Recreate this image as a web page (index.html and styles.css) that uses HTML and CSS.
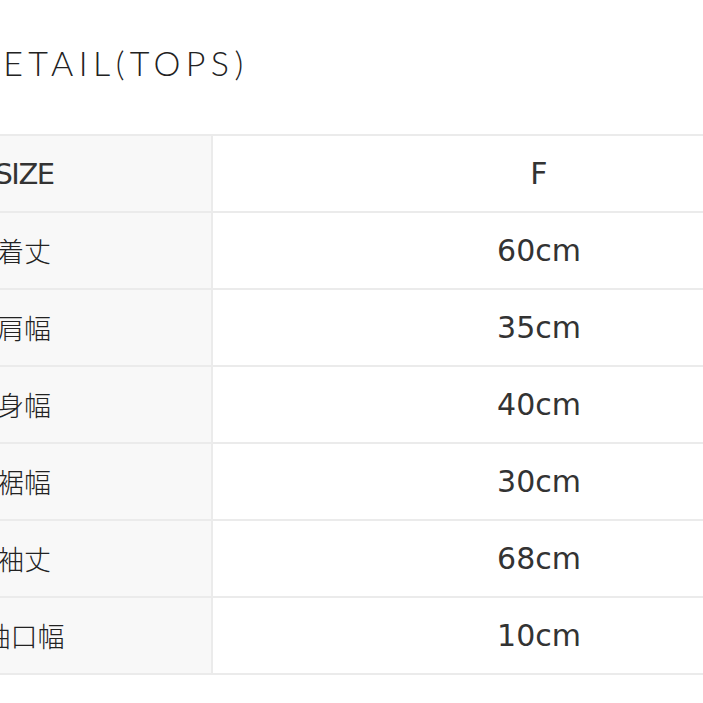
FILE: index.html
```html
<!DOCTYPE html>
<html lang="ja">
<head>
<meta charset="utf-8">
<link rel="stylesheet" href="styles.css">
</head>
<body>
<div class="page">
  <h2 class="title">DETAIL(TOPS)</h2>
  <table class="size-table">
    <tr><th class="latin">SIZE</th><td>F</td></tr>
    <tr><th>着丈</th><td>60cm</td></tr>
    <tr><th>肩幅</th><td>35cm</td></tr>
    <tr><th>身幅</th><td>40cm</td></tr>
    <tr><th>裾幅</th><td>30cm</td></tr>
    <tr><th>袖丈</th><td>68cm</td></tr>
    <tr><th>袖口幅</th><td>10cm</td></tr>
  </table>
</div>
</body>
</html>
```
FILE: styles.css
```css
html, body {
  margin: 0;
  padding: 0;
  background: #ffffff;
  overflow: hidden;
}
.page {
  margin-left: -165px;
  width: 1100px;
  color: #2b2b2b;
}
.title {
  margin: 0;
  padding: 42px 0 0 137px;
  height: 134px;
  box-sizing: border-box;
  font-family: "Lato", sans-serif;
  font-size: 34px;
  font-weight: 300;
  letter-spacing: 5.4px;
  line-height: 42px;
  color: #222222;
}
.size-table {
  border-collapse: collapse;
  width: 1032px;
}
.size-table tr {
  height: 77px;
}
.size-table th,
.size-table td {
  border: 2px solid #ebebeb;
  padding: 0;
  text-align: center;
  font-weight: 400;
}
.size-table th {
  width: 374px;
  background: #f8f8f8;
  font-family: "Noto Sans CJK JP", sans-serif;
  font-size: 27px;
  font-weight: 300;
  color: #222222;
}
.size-table th.latin {
  font-family: "DejaVu Sans", sans-serif;
  font-size: 29px;
  font-weight: 400;
  letter-spacing: -1.5px;
  color: #333333;
}
.size-table td {
  background: #ffffff;
  font-family: "DejaVu Sans", sans-serif;
  font-size: 30px;
  color: #333333;
}
```
